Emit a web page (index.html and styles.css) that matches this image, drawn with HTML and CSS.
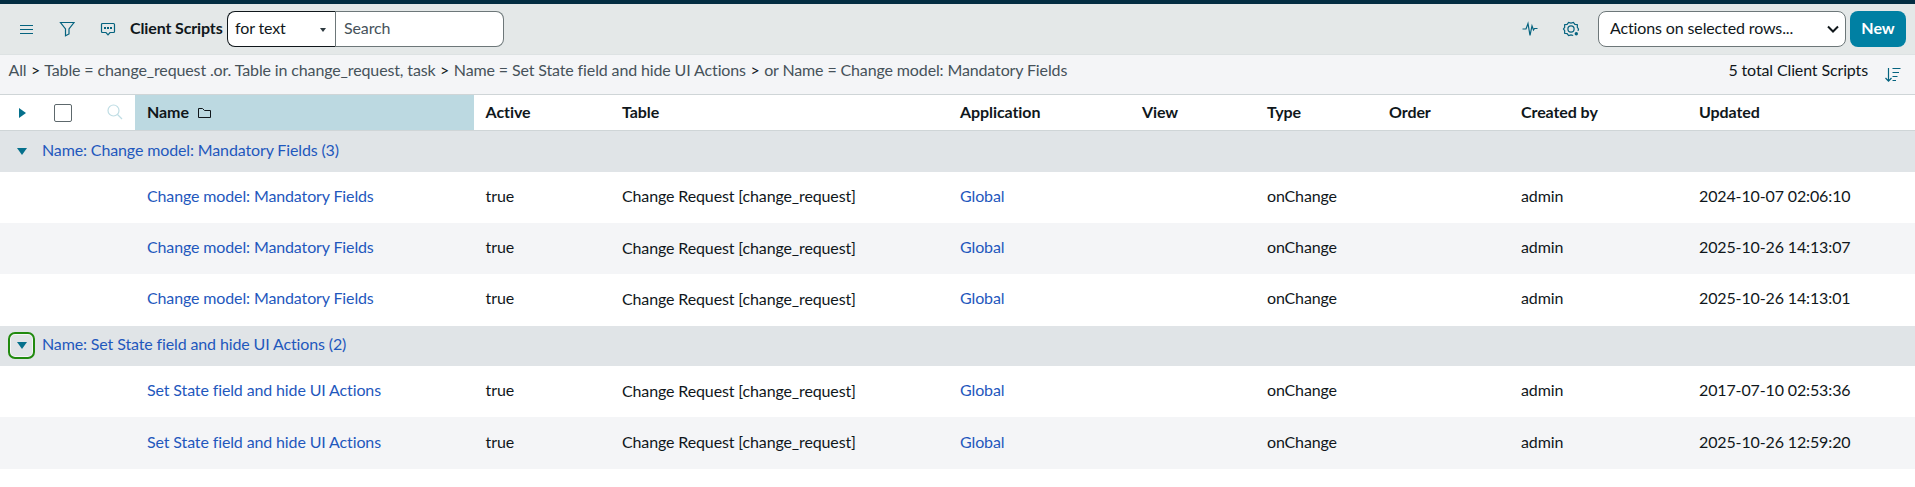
FILE: index.html
```html
<!DOCTYPE html>
<html lang="en">
<head>
<meta charset="utf-8">
<title>Client Scripts</title>
<link rel="stylesheet" href="styles.css">
</head>
<body>
<header class="toolbar">
  <div class="tools">
    <svg class="icon" width="16" height="16" viewBox="0 0 16 16"><path d="M2 4.500h13M2 8.500h13M2 12.500h13"/></svg>
    <svg class="icon" width="16" height="16" viewBox="0 0 16 16"><path d="M1.500 1.500h13.500L10 8v5L6.500 14.800V8z"/></svg>
    <svg class="icon" width="16" height="16" viewBox="0 0 16 16"><path d="M2.500 2.500h11a1 1 0 0 1 1 1v7a1 1 0 0 1-1 1h-3.500L8 13.800 6 11.500H2.500a1 1 0 0 1-1-1v-7a1 1 0 0 1 1-1z"/><path class="solid" d="M4 6h2v2H4zM7 6h2v2H7zM10 6h2v2h-2z"/></svg>
  </div>
  <h1 class="title">Client Scripts</h1>
  <div class="search">
    <div class="search-type">for text<span class="caret"></span></div>
    <div class="search-input">Search</div>
  </div>
  <div class="actions">
    <svg class="icon" width="16" height="16" viewBox="0 0 16 16"><path d="M0.500 8h3.500L6 2.500l2 12L10 5l1.500 4 1-1.500h3"/></svg>
    <svg class="icon gear" width="18" height="18" viewBox="0 0 18 18"><path d="M16 10.800l.5-1.800-1.200-1.700.1-2.600-2.500-.3-1.500-1.900-2.400.6-2.400-.6-1.500 1.900-2.500.3.100 2.600L1.500 9l1.200 1.700-.1 2.600 2.500.3 1.500 1.900 2.400-.6 2.200.6"/><circle cx="9" cy="9" r="3.100"/><circle class="solid" cx="14.300" cy="13.800" r="1.700"/></svg>
    <div class="action-select">Actions on selected rows...<svg class="chevron" width="12" height="8" viewBox="0 0 12 8"><path d="M1 1.500l5 5 5-5"/></svg></div>
    <button class="new">New</button>
  </div>
</header>
<nav class="crumbs">
  <div class="path">All <b>&gt;</b> Table = change_request .or. Table in change_request, task <b>&gt;</b> Name = Set State field and hide UI Actions <b>&gt;</b> or Name = Change model: Mandatory Fields</div>
  <div class="total">5 total Client Scripts</div>
  <svg class="icon sort" width="16" height="16" viewBox="0 0 16 16"><path d="M3.500 1v13M0.500 11l3 3.200 3-3.200M7.500 1.500h8M7.500 5.500h6.500M7.500 9.500h5M7.500 13.500h3.500"/></svg>
</nav>
<main class="list">
  <div class="row head">
    <div class="controls">
      <span class="arrow-right"></span><span class="checkbox"></span>
      <svg class="lens" width="16" height="16" viewBox="0 0 16 16"><circle cx="6.500" cy="6.500" r="5.500"/><path d="M10.500 10.500l4.500 4.500"/></svg>
    </div>
    <div class="name sorted">Name<svg class="folder" width="14" height="12" viewBox="0 0 14 12"><path d="M.5 10.500v-9h4l2 2h6v7z"/></svg></div>
    <div class="active">Active</div><div>Table</div><div>Application</div><div>View</div><div>Type</div><div>Order</div><div>Created by</div><div>Updated</div>
  </div>
  <div class="group first"><span class="toggle"><i></i></span><a>Name: Change model: Mandatory Fields (3)</a></div>
  <div class="row"><div></div><div class="name"><a>Change model: Mandatory Fields</a></div><div class="active">true</div><div>Change Request [change_request]</div><div><a>Global</a></div><div></div><div>onChange</div><div></div><div>admin</div><div>2024-10-07 02:06:10</div></div>
  <div class="row alt"><div></div><div class="name"><a>Change model: Mandatory Fields</a></div><div class="active">true</div><div class="low">Change Request [change_request]</div><div><a>Global</a></div><div></div><div>onChange</div><div></div><div>admin</div><div>2025-10-26 14:13:07</div></div>
  <div class="row tall"><div></div><div class="name"><a>Change model: Mandatory Fields</a></div><div class="active">true</div><div class="low">Change Request [change_request]</div><div><a>Global</a></div><div></div><div>onChange</div><div></div><div>admin</div><div>2025-10-26 14:13:01</div></div>
  <div class="group"><span class="toggle focused"><i></i></span><a>Name: Set State field and hide UI Actions (2)</a></div>
  <div class="row"><div></div><div class="name"><a>Set State field and hide UI Actions</a></div><div class="active">true</div><div class="low">Change Request [change_request]</div><div><a>Global</a></div><div></div><div>onChange</div><div></div><div>admin</div><div>2017-07-10 02:53:36</div></div>
  <div class="row alt tall last"><div></div><div class="name"><a>Set State field and hide UI Actions</a></div><div class="active">true</div><div>Change Request [change_request]</div><div><a>Global</a></div><div></div><div>onChange</div><div></div><div>admin</div><div>2025-10-26 12:59:20</div></div>
</main>
</body>
</html>
```
FILE: styles.css
```css
* { box-sizing: border-box; }
body {
  margin: 0;
  background: #fff;
  color: #10171b;
  font: 16px/24px Lato, sans-serif;
  letter-spacing: -0.13px;
}
.icon { fill: none; stroke: #05637f; stroke-width: 1.2; flex: none; }
.icon .solid { fill: #05637f; stroke: none; }
.toolbar {
  display: flex;
  align-items: center;
  height: 55px;
  padding: 0 9px 0 18px;
  border-top: 4px solid #032d42;
  border-bottom: 1px solid #dde2e3;
  background: #e4e8e8;
}
.tools { display: flex; gap: 25px; margin-top: -1px; }
.title { width: 97px; margin: -2px 0 0 14px; font-size: 16px; font-weight: 700; white-space: nowrap; }
.search { display: flex; height: 36px; line-height: 32px; }
.search-type {
  display: flex;
  align-items: center;
  justify-content: space-between;
  width: 109px;
  padding: 0 9px 2px 7px;
  border: 1px solid #10171b;
  border-right-color: #6d7779;
  border-radius: 8px 0 0 8px;
  background: #fff;
}
.caret { margin-top: 4px; border: 3px solid transparent; border-top: 4px solid #2e3a40; border-bottom: 0; }
.search-input {
  width: 168px;
  padding-left: 8px;
  border: 1px solid #6d7779;
  border-left: 0;
  border-radius: 0 8px 8px 0;
  background: #fff;
  color: #46525a;
}
.actions { display: flex; align-items: center; margin-left: auto; }
.actions .gear { margin: 0 18px 0 24px; }
.action-select {
  display: flex;
  align-items: center;
  justify-content: space-between;
  width: 248px;
  height: 36px;
  padding: 0 6px 2px 11px;
  border: 1px solid #6d7779;
  border-radius: 8px;
  background: #fff;
}
.chevron { margin-top: 2px; fill: none; stroke: #10171b; stroke-width: 2; }
.new {
  width: 56px;
  height: 36px;
  margin-left: 4px;
  padding: 0 0 2px;
  border: 0;
  border-radius: 8px;
  background: #0080a3;
  color: #fff;
  font: 700 16px/34px Lato, sans-serif;
}
.crumbs {
  display: flex;
  height: 40px;
  padding: 3px 14px 0 8.5px;
  border-bottom: 1px solid #cfd5d7;
  background: #f4f5f7;
}
.path { color: #46525a; }
.path b { margin: 0 0.6px; color: #10171b; font-weight: 400; }
.total { margin-left: auto; }
.sort { margin: 9px 0 0 17px; }
.row {
  display: grid;
  grid-template-columns: 135px 339px 137px 338px 182px 125px 122px 132px 178px 1fr;
  height: 51px;
  background: #fff;
}
.row > div { padding: 12px 0 0 11px; white-space: nowrap; }
.row > .low, .last > div { padding-top: 13px; }
.row > .name { padding-left: 12px; }
.row > .active { padding-left: 11.6px; }
.alt { background: #f4f5f7; }
.tall { height: 52px; }
a { color: #1f58bd; }
.head { height: 36px; border-bottom: 1px solid #cfd5d7; font-weight: 700; letter-spacing: -0.08px; }
.head > div { padding-top: 5px; }
.head > .controls { display: flex; align-items: center; padding: 0 0 0 19px; }
.arrow-right { border: 5px solid transparent; border-left: 7px solid #05708c; border-right: 0; }
.checkbox { width: 18px; height: 18px; margin: 0 35px 0 28px; border: 1px solid #5d686c; border-radius: 2px; }
.lens { margin-top: -1px; fill: none; stroke: #bfdde4; stroke-width: 1.2; }
.sorted { background: #bcd9e1; }
.folder { margin-left: 9px; fill: none; stroke: #10171b; vertical-align: -1px; }
.group { display: flex; align-items: center; height: 40px; padding: 0 0 2px 8px; background: #e0e4e7; }
.group a { margin-top: -2px; }
.first { height: 41px; }
.toggle {
  display: grid;
  place-items: center;
  width: 27px;
  height: 27px;
  margin: 1px 7px 0 0;
  border: 2px solid transparent;
  border-radius: 7px;
}
.toggle i { border: 5px solid transparent; border-top: 7px solid #05708c; border-bottom: 0; }
.focused { border-color: #218a0f; box-shadow: inset 0 0 0 1px #f4f5f7; }
```
